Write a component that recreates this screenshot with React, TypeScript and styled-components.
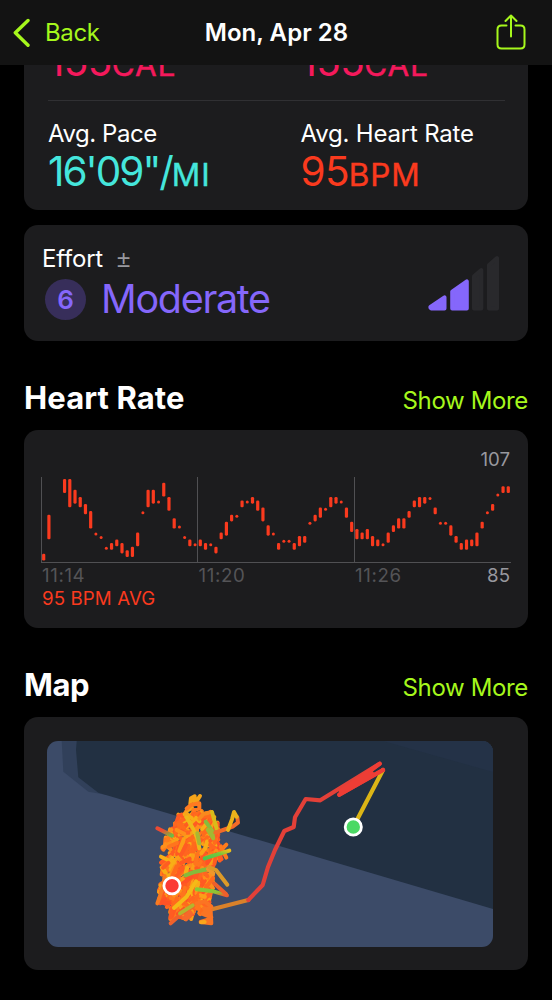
import React, { FunctionComponent } from 'react';
import styled, { createGlobalStyle } from 'styled-components';

const colors = {
	lime: '#a6f71c',
	card: '#1c1c1e',
	cyan: '#45e6dc',
	red: '#fa3a1e',
	pink: '#f4195c',
	violet: '#8567fb',
	grey: '#98989e',
	axis: '#545457',
};

const GlobalStyle = createGlobalStyle`
	body {
		margin: 0;
		background: #000;
		color: #fff;
		font-family: Inter, 'Liberation Sans', sans-serif;
		font-size: 24px;
	}

	svg {
		display: block;
	}
`;

const Screen = styled.div`
	width: 552px;
	height: 1000px;
	overflow: hidden;
	background: #000;
`;

const NavBar = styled.header`
	position: relative;
	z-index: 1;
	box-sizing: border-box;
	display: grid;
	grid-template-columns: 1fr auto 1fr;
	align-items: center;
	height: 65px;
	padding: 0 26px 0 13px;
	background: #131313;
`;

const BackButton = styled.div`
	display: flex;
	align-items: center;
	gap: 14px;
	color: ${colors.lime};
	letter-spacing: -0.35px;
	line-height: 30px;

	svg {
		margin-top: -2px;
	}
`;

const NavTitle = styled.div`
	font-weight: 600;
	letter-spacing: 0.05px;
	line-height: 30px;
	margin-left: 14px;
`;

const ShareButton = styled.div`
	justify-self: end;
	margin-top: -2px;
`;

const Content = styled.main`
	padding: 0 24px;
`;

const Card = styled.section<{ $height: number }>`
	box-sizing: border-box;
	height: ${props => props.$height}px;
	border-radius: 14px;
	background: ${colors.card};
`;

const StatsCard = styled(Card)`
	padding: 0 23px 0 24px;
	border-radius: 0 0 14px 14px;
`;

const StatsRow = styled.div`
	display: grid;
	grid-template-columns: 252.5px 1fr;
`;

const ScrolledRow = styled(StatsRow)`
	height: 35px;
	border-bottom: 1px solid #303033;

	> div {
		margin-top: -25px;
	}
`;

const StatLabel = styled.div<{ $spacing: number }>`
	margin-top: 18px;
	line-height: 30px;
	letter-spacing: ${props => props.$spacing}px;
`;

const StatValue = styled.div<{ $color: string; $spacing?: number }>`
	margin-top: 1px;
	color: ${props => props.$color};
	font-size: 40.5px;
	font-weight: 400;
	line-height: 44px;
	white-space: nowrap;
	letter-spacing: ${props => props.$spacing || 0}px;
`;

const Unit = styled.span`
	font-size: 31.5px;
	letter-spacing: 0.9px;
	-webkit-text-stroke: 0.4px currentColor;
`;

const EffortCard = styled(Card)`
	display: flex;
	justify-content: space-between;
	margin-top: 15px;
	padding: 19px 28px 0 18px;
`;

const EffortTitle = styled.div`
	display: flex;
	gap: 14px;
	line-height: 30px;
	letter-spacing: -0.2px;
`;

const EffortToggle = styled.span`
	color: ${colors.grey};
	font-family: 'Liberation Sans', sans-serif;
`;

const EffortLevel = styled.div`
	display: flex;
	align-items: center;
	gap: 15px;
	height: 44px;
	margin: 3px 0 0 3px;
	color: ${colors.violet};
	font-size: 39.5px;
	letter-spacing: -1.3px;
`;

const EffortScore = styled.div`
	display: flex;
	align-items: center;
	justify-content: center;
	width: 41px;
	height: 41px;
	border-radius: 50%;
	background: #372e5a;
	font-size: 26px;
	font-weight: 600;
	letter-spacing: 0;
`;

const SectionHeader = styled.div`
	display: flex;
	justify-content: space-between;
	align-items: flex-start;
	height: 40px;
	margin-top: 40px;
`;

const SectionTitle = styled.h2<{ $spacing: number }>`
	margin: 0;
	font-size: 31px;
	font-weight: 700;
	line-height: 34px;
	letter-spacing: ${props => props.$spacing}px;
`;

const ShowMore = styled.div`
	margin-top: 5px;
	color: ${colors.lime};
	line-height: 30px;
	letter-spacing: -0.35px;
`;

const HeartCard = styled(Card)`
	margin-top: 9px;
	padding: 16px 17px 0;
	font-size: 18.7px;
`;

const PeakLabel = styled.div`
	margin-right: 1px;
	color: ${colors.grey};
	line-height: 28px;
	text-align: right;
`;

const AxisLabels = styled.div`
	display: grid;
	grid-template-columns: 156.5px 156.5px 1fr auto;
	padding: 0 1px;
	color: ${colors.axis};
	line-height: 25px;
	letter-spacing: 0.6px;
`;

const LowLabel = styled.span`
	color: ${colors.grey};
	letter-spacing: 0;
`;

const AverageLabel = styled.div`
	margin: -2px 0 0 1px;
	color: ${colors.red};
	line-height: 25px;
	letter-spacing: 0.1px;
`;

const MapCard = styled(Card)`
	margin-top: 9px;
	padding: 24px 35px 0 23px;
`;

const MapFrame = styled.div`
	height: 206px;
	border-radius: 11px;
	overflow: hidden;
`;

// [slot, beats under the peak at the top, beats under the peak at the bottom]
const samples: number[][] = [
	[0, 21, 22], [1, 10, 16], [4, 0, 3], [5, 0, 7], [6, 3, 6], [7, 5, 7], [8, 7, 9], [9, 9, 13],
	[10, 15], [11, 16], [12, 19], [13, 18, 19], [14, 17, 18], [15, 18, 20], [16, 20, 21], [17, 19, 21],
	[18, 15, 18], [19, 9], [20, 3, 7], [21, 3, 6], [22, 6], [23, 1, 4], [24, 5, 8], [25, 11, 13],
	[26, 13], [27, 16], [28, 17, 18], [29, 18], [30, 17, 18], [31, 18, 19], [32, 18], [33, 19, 20],
	[34, 15, 16], [35, 12, 15], [36, 10, 11], [37, 10], [38, 6, 7], [39, 6], [40, 5, 6], [41, 6, 8],
	[42, 8, 11], [43, 13, 15], [44, 15], [45, 18, 19], [46, 17], [47, 17], [48, 18, 19], [49, 16, 18],
	[50, 16, 17], [51, 12], [52, 10, 11], [53, 8, 10], [54, 8], [55, 5, 7], [56, 5, 6], [57, 6],
	[58, 8, 10], [59, 12, 14], [60, 14, 16], [61, 15, 16], [62, 14, 16], [63, 16, 18], [64, 17, 18], [65, 18],
	[66, 15, 17], [67, 13, 14], [68, 11, 13], [69, 11, 13], [70, 9, 10], [71, 6, 7], [72, 5, 7], [73, 5, 6],
	[74, 5], [75, 8, 9], [76, 12], [77, 12], [78, 13, 15], [79, 16, 17], [80, 18, 19], [81, 17, 19],
	[82, 17, 18], [83, 15, 18], [84, 12, 13], [85, 9], [86, 7, 8], [87, 4], [88, 2, 3], [89, 2, 3],
];

const HeartChart: FunctionComponent = () => (
	<svg width='470' height='86' style={{ marginTop: 3 }}>
		<path d='M.5 0V85.5M156.5 0V85M313.5 0V85M0 85.5H470' stroke='#505053' fill='none' />
		{samples.map(([slot, high, low]) => {
			const x = 2.7 + slot * 5.22;
			const y = 2.3 + high * 3.556;
			return low === undefined ? (
				<circle key={slot} cx={x} cy={y + 1.4} r={1.5} fill={colors.red} />
			) : (
				<rect
					key={slot}
					x={x - 1.6}
					y={y - 0.2}
					width={3.2}
					height={(low - high) * 3.556 + 3.2}
					rx={1.3}
					fill={colors.red}
				/>
			);
		})}
	</svg>
);

const EffortBars: FunctionComponent = () => (
	<svg width='72' height='56' style={{ marginTop: 11 }}>
		<g strokeWidth='4' strokeLinejoin='round'>
			<path d='M2.4 52.6V51.8L16.5 42.3V53.4H3Z' fill={colors.violet} stroke={colors.violet} />
			<path d='M24.2 36.6L38.8 26.3V53.4H24.2Z' fill={colors.violet} stroke={colors.violet} />
			<path d='M46 21.3L53.3 15V53.4H46Z' fill='#29292c' stroke='#29292c' />
			<path d='M61 10L69 3V53.4H61Z' fill='#29292c' stroke='#29292c' />
		</g>
	</svg>
);

// y, then the left and right edge of the wandering track there
const bands = [
	[108, 112, 215], [124, 102, 226], [142, 98, 236], [160, 82, 238], [178, 74, 238], [196, 64, 232],
	[212, 104, 262], [226, 86, 250], [240, 60, 232], [256, 66, 222], [272, 62, 218], [288, 60, 220],
	[304, 58, 222], [320, 56, 222], [336, 54, 218], [352, 50, 202], [368, 58, 212], [384, 80, 212],
	[400, 88, 164],
];

const trackColors = [
	'#ff5c22', '#ff6b1c', '#ff7b1b', '#ff8f1b', '#ff5226', '#fb9f18', '#ff6620', '#ff751d', '#ff5a22', '#f8ae16',
];

const buildTrack = () => {
	let seed = 41;
	const random = () => {
		seed = (seed * 16807) % 2147483647;
		return seed / 2147483647;
	};
	const lines: { d: string; color: string }[] = [];
	for (let i = 0; i < 460; i++) {
		const [y, left, right] = bands[i % bands.length];
		const x = left + random() * (right - left);
		const angle = (random() < 0.68 ? -0.95 : 0.55) + (random() - 0.5) * 1.1;
		const half = 6 + random() * 13;
		const dx = Math.cos(angle) * half;
		const dy = Math.sin(angle) * half;
		const inset = Math.abs(dx) + 3;
		const cx = Math.min(Math.max(x, left + inset), right - inset);
		const cy = y + (random() - 0.5) * 12;
		lines.push({
			d: `M${(cx - dx).toFixed(1)} ${(cy - dy).toFixed(1)}L${(cx + dx).toFixed(1)} ${(cy + dy).toFixed(1)}`,
			color: trackColors[Math.floor(random() * trackColors.length)],
		});
	}
	return lines;
};

const track = buildTrack();

const RouteMap: FunctionComponent = () => (
	<svg width='446' height='206' viewBox='0 0 446 206'>
		<defs>
			<linearGradient id='greenUp' x1='0' y1='1' x2='1' y2='0'>
				<stop offset='0' stopColor='#4bc64d' />
				<stop offset='.6' stopColor='#77c83c' />
				<stop offset='1' stopColor='#f0bc17' />
			</linearGradient>
			<linearGradient id='greenDown' x1='0' y1='0' x2='1' y2='1'>
				<stop offset='0' stopColor='#86cc36' />
				<stop offset='.6' stopColor='#93bf32' />
				<stop offset='1' stopColor='#ef5b2c' />
			</linearGradient>
			<linearGradient id='redGreen' x1='0' y1='0' x2='1' y2='1'>
				<stop offset='.3' stopColor='#ec4b33' />
				<stop offset='1' stopColor='#6dbc45' />
			</linearGradient>
		</defs>
		<rect width='446' height='206' fill='#3c4b68' />
		<path d='M14.7 0L16.3 30.7L41.3 50.7L60 54L80 0Z' fill='#31405a' />
		<path d='M29.7 0L29 9L31.3 36.3L51.3 51.7L446 168V0Z' fill='#223042' />
		<path d='M336 0L446 31V0Z' fill='#243247' />
		<g fill='none' strokeWidth='4.2' strokeLinecap='round' strokeLinejoin='round'>
			<path d='M306.3 86L336 29' stroke='#dcb516' />
			<path d='M201.3 159L166 168' stroke='#d9812a' />
			<path
				d='M336 29L292.3 53.7L332.7 22.7L273.3 59.3L258.7 58L248 76.3L246.7 86L237.3 90L228 109L221 126L215.7 144L201.3 159'
				stroke='#e34038'
			/>
			<path d='M336 29L292.3 53.7L325 32.5L294 50L332.7 22.7' stroke='#ee3d35' />
		</g>
		<g transform='translate(93 39) scale(.3333)' fill='none' strokeWidth='12' strokeLinecap='round' strokeLinejoin='round'>
			{track.map((line, i) => (
				<path key={i} d={line.d} stroke={line.color} />
			))}
			<path d='M138 110L140 92L156 84L151 71L153 55L164 49L163 65L171 62L180 48' stroke='#f6a51b' />
			<path d='M140 86L155 74L178 70L178 86L160 90' stroke='#ff7a20' />
			<path d='M178 116L190 102L215 96' stroke='#f98a1d' />
			<path d='M216 96L230 146' stroke='#d9bb1a' />
			<path d='M197 125L222 160' stroke='#86bc3c' />
			<path d='M203 149L220 175L214 150' stroke='#a3b832' />
			<path d='M226 158L258 147L278 140L294 128L292 112' stroke='#f36b28' />
			<path d='M264 150L276 118L282 96L290 110' stroke='#eeb21a' />
			<path d='M52 145L96 167' stroke='url(#redGreen)' />
			<path d='M140 112L160 148L172 175L178 205' stroke='#edb91a' />
			<path d='M172 160L178 190' stroke='#a9b832' />
			<path d='M194 235L268 212' stroke='url(#greenUp)' />
			<path d='M136 286L160 277L204 267' stroke='#86bb3b' />
			<path d='M204 267L220 280' stroke='#f0972a' />
			<path d='M208 262L228 270L262 314' stroke='#dd9a28' />
			<path d='M170 328L220 334L261 346' stroke='url(#greenDown)' />
			<path d='M222 310L258 342' stroke='#ee5f2b' />
			<path d='M102 384L140 350L168 304' stroke='#f4ba17' />
			<path d='M52 370L70 320L74 288' stroke='#f77a22' />
			<path d='M92 430L126 400L160 378' stroke='#f0612b' />
			<path d='M120 400L158 376' stroke='#b5b42d' />
			<path d='M132 414L150 396M138 418L154 402' stroke='#f6692a' />
			<path d='M170 370L194 364L214 380L188 402L214 412L192 385L212 392L214 430L182 426L206 418' stroke='#fb7423' />
			<path d='M183 427L194 426' stroke='#fba71b' />
		</g>
		<circle cx='306.3' cy='86' r='8.1' fill='#4bd964' stroke='#fff' strokeWidth='2.8' />
		<circle cx='125' cy='144.7' r='8.1' fill='#fb3b35' stroke='#fff' strokeWidth='2.8' />
	</svg>
);

const App: FunctionComponent = () => (
	<Screen>
		<GlobalStyle />
		<NavBar>
			<BackButton>
				<svg width='18' height='30' viewBox='0 0 18 30' fill='none'>
					<path
						d='M15 3.5L2.3 15.7L15 28.2'
						stroke={colors.lime}
						strokeWidth='3.4'
						strokeLinecap='round'
						strokeLinejoin='round'
					/>
				</svg>
				<span>Back</span>
			</BackButton>
			<NavTitle>Mon, Apr 28</NavTitle>
			<ShareButton>
				<svg
					width='30'
					height='36'
					viewBox='0 0 30 36'
					fill='none'
					stroke={colors.lime}
					strokeWidth='2'
					strokeLinecap='round'
					strokeLinejoin='round'
				>
					<path d='M10.5 11.5H5.5Q1.5 11.5 1.5 15.5V30.5Q1.5 34.5 5.5 34.5H24.5Q28.5 34.5 28.5 30.5V15.5Q28.5 11.5 24.5 11.5H19.5' />
					<path d='M15 22.5V1.5M9.5 7L15 1.5L20.5 7' />
				</svg>
			</ShareButton>
		</NavBar>
		<Content>
			<StatsCard $height={145}>
				<ScrolledRow>
					<StatValue $color={colors.pink} $spacing={-0.7}>155<Unit>CAL</Unit></StatValue>
					<StatValue $color={colors.pink} $spacing={-0.7}>155<Unit>CAL</Unit></StatValue>
				</ScrolledRow>
				<StatsRow>
					<div>
						<StatLabel $spacing={-0.45}>Avg. Pace</StatLabel>
						<StatValue $color={colors.cyan} $spacing={-2}>16'09"/<Unit>MI</Unit></StatValue>
					</div>
					<div>
						<StatLabel $spacing={-0.2}>Avg. Heart Rate</StatLabel>
						<StatValue $color={colors.red} $spacing={-0.7}>95<Unit>BPM</Unit></StatValue>
					</div>
				</StatsRow>
			</StatsCard>
			<EffortCard $height={116}>
				<div>
					<EffortTitle>
						Effort <EffortToggle>±</EffortToggle>
					</EffortTitle>
					<EffortLevel>
						<EffortScore>6</EffortScore>
						Moderate
					</EffortLevel>
				</div>
				<EffortBars />
			</EffortCard>
			<SectionHeader>
				<SectionTitle $spacing={0.1}>Heart Rate</SectionTitle>
				<ShowMore>Show More</ShowMore>
			</SectionHeader>
			<HeartCard $height={198}>
				<PeakLabel>107</PeakLabel>
				<HeartChart />
				<AxisLabels>
					<span>11:14</span>
					<span>11:20</span>
					<span>11:26</span>
					<LowLabel>85</LowLabel>
				</AxisLabels>
				<AverageLabel>95 BPM AVG</AverageLabel>
			</HeartCard>
			<SectionHeader>
				<SectionTitle $spacing={-0.4}>Map</SectionTitle>
				<ShowMore>Show More</ShowMore>
			</SectionHeader>
			<MapCard $height={253}>
				<MapFrame>
					<RouteMap />
				</MapFrame>
			</MapCard>
		</Content>
	</Screen>
);

export default App;
